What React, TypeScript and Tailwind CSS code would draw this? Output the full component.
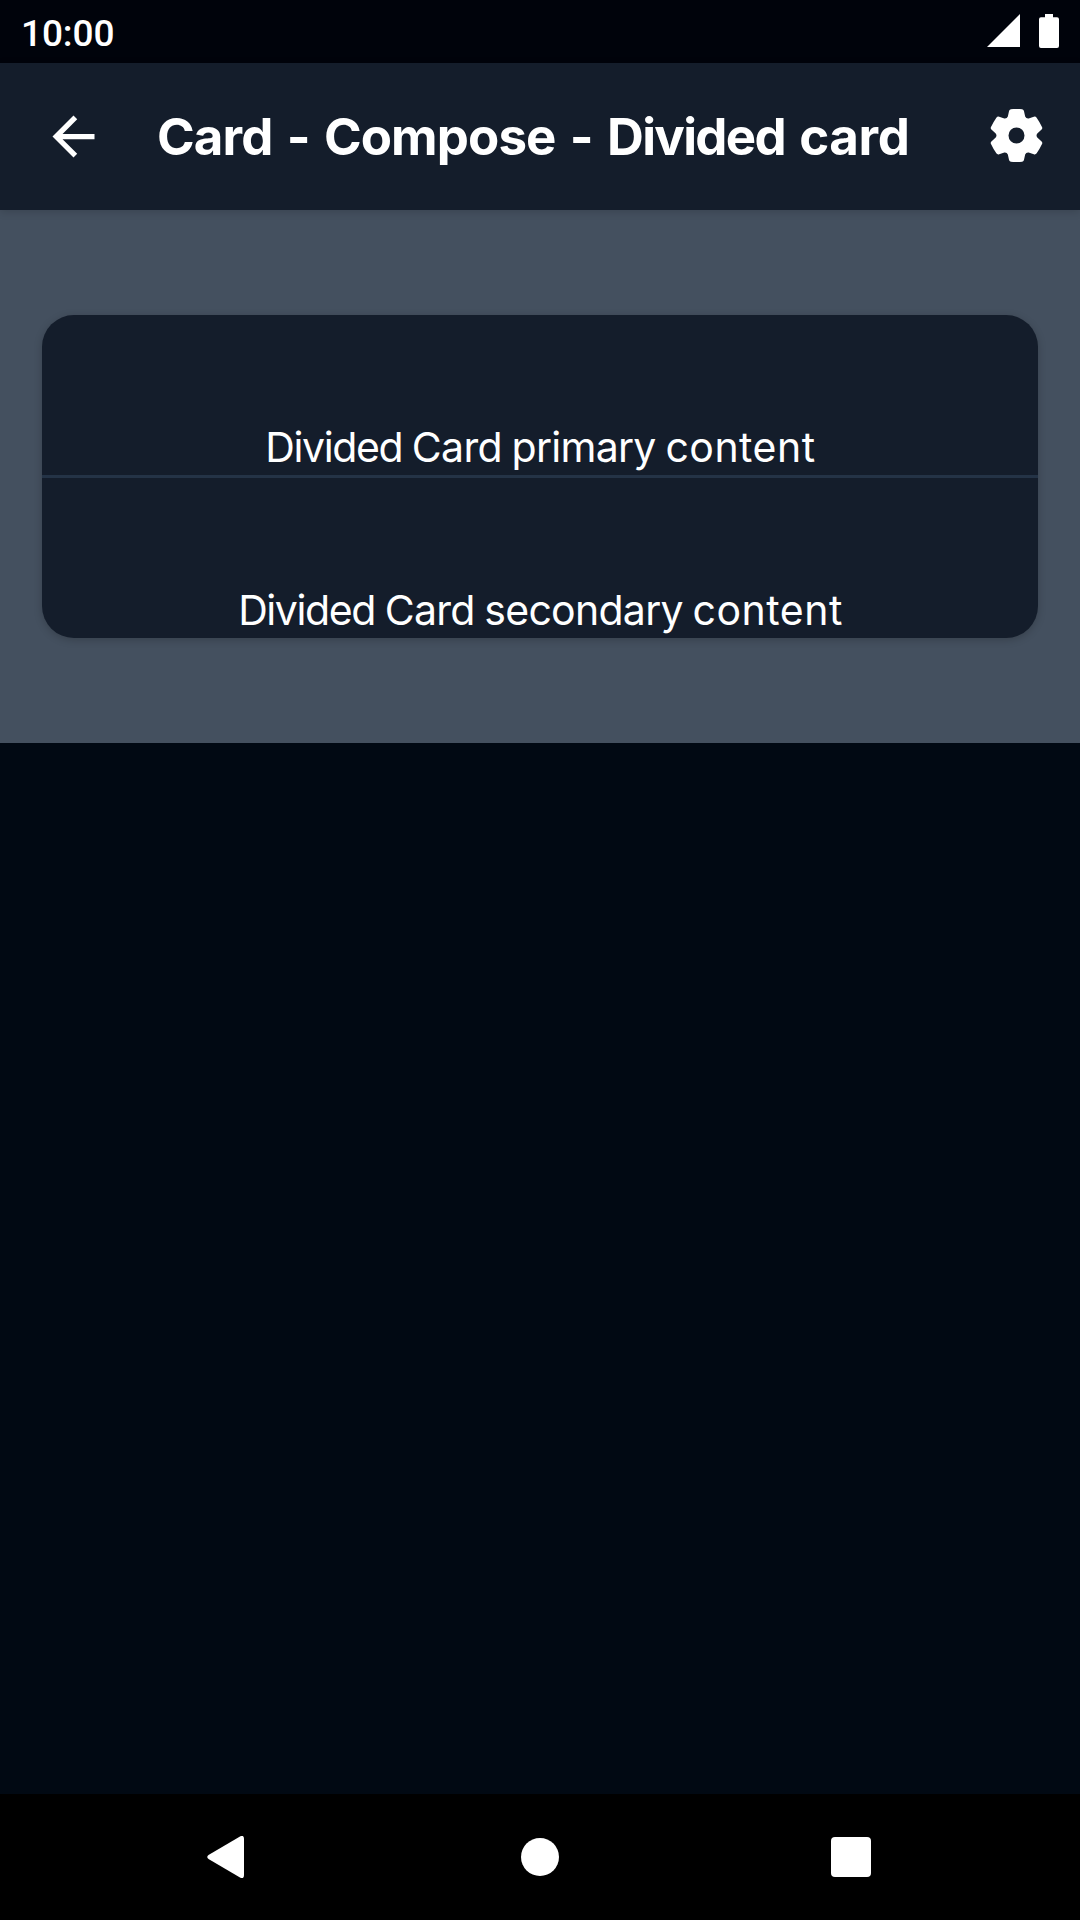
import React from "react";
import { MdArrowBack } from "react-icons/md";

const rotate = (x: number, y: number, deg: number) => {
  const a = (deg * Math.PI) / 180;
  const c = Math.cos(a);
  const s = Math.sin(a);
  return `${(x * c - y * s).toFixed(2)} ${(x * s + y * c).toFixed(2)}`;
};

// Six rounded teeth around a circular hole.
const gearPath =
  [0, 60, 120, 180, 240, 300]
    .map((d, i) => {
      const p = (x: number, y: number) => rotate(x, y, d);
      return `${i ? "L" : "M"}${p(-26, -57)}L${p(-22.5, -73)}Q${p(-22, -78)} ${p(-17, -79)}Q${p(0, -80.5)} ${p(17, -79)}Q${p(22, -78)} ${p(22.5, -73)}L${p(26, -57)}Q${p(29, -50)} ${p(36.4, -51)}`;
    })
    .join("") + "ZM24 0A24 24 0 1 0 -24 0A24 24 0 1 0 24 0Z";

function StatusBar() {
  return (
    <div className="flex h-[63px] items-center justify-between bg-[#00030b] pr-[21px] pl-[21px]">
      <span className="pt-[3px] font-['Roboto',sans-serif] text-[37px] leading-none font-medium tracking-[-0.1px]">10:00</span>
      <div className="flex items-center gap-[19px]">
        <svg className="mb-[2px] h-[33px] w-[33px]" viewBox="0 0 33 33" fill="currentColor">
          <path d="M0 33L33 0V33Z" />
        </svg>
        <svg className="mb-px h-[34px] w-5" viewBox="0 0 20 34" fill="currentColor">
          <path d="M6 0h8v3.3h4q2 0 2 2V32q0 2-2 2H2q-2 0-2-2V5.300q0-2 2-2h4z" />
        </svg>
      </div>
    </div>
  );
}

function AppBar() {
  return (
    <header className="relative flex h-[147px] items-center bg-[#141d2b] pr-[37px] pl-[42px] shadow-[0_2px_8px_rgba(0,0,0,0.15)]">
      <MdArrowBack className="size-[63px]" />
      <h1 className="mt-px ml-[52px] flex-1 text-[51px] leading-[52px] font-bold tracking-[-0.9px] whitespace-nowrap [word-spacing:3.1px]">
        Card - Compose - <span className="tracking-[-1.7px]">Divided</span> <span className="tracking-[-0.4px]">card</span>
      </h1>
      <svg className="mb-[2px] size-[53px]" viewBox="-79.5 -79.5 159 159" fill="currentColor" fillRule="evenodd">
        <path d={gearPath} />
      </svg>
    </header>
  );
}

function CardText({ subject }: { subject: string }) {
  return (
    <p className="h-[160px] pt-[106px] pl-px">
      <span className="tracking-[-1.4px]">Divided</span> Card {subject} <span className="tracking-[0.5px]">content</span>
    </p>
  );
}

function NavigationBar() {
  return (
    <nav className="flex h-[126px] items-center bg-black">
      <svg className="ml-[207px] h-[42px] w-[37px]" viewBox="0 0 37 42" fill="currentColor">
        <path d="M33 .4Q37-1.500 37 3V39Q37 43.500 33 41.600L1.500 23Q-1 21 1.500 19Z" />
      </svg>
      <div className="ml-[277px] size-[38px] rounded-full bg-white" />
      <div className="ml-[272px] size-10 rounded-[4px] bg-white" />
    </nav>
  );
}

export default function App() {
  return (
    <div className="flex h-[1920px] w-[1080px] flex-col overflow-hidden bg-[#010913] font-['Inter',sans-serif] text-white">
      <StatusBar />
      <AppBar />
      <section className="h-[533px] bg-[#44505f] px-[42px] pt-[105px]">
        <div className="h-[323px] overflow-hidden rounded-[32px] bg-[#141d2b] text-center text-[41px] leading-[52px] tracking-[-0.72px] shadow-[0_2px_8px_rgba(0,0,0,0.2)] [word-spacing:-1.1px]">
          <CardText subject="primary" />
          <div className="h-[3px] bg-[#243346]" />
          <CardText subject="secondary" />
        </div>
      </section>
      <main className="flex-1" />
      <NavigationBar />
    </div>
  );
}
